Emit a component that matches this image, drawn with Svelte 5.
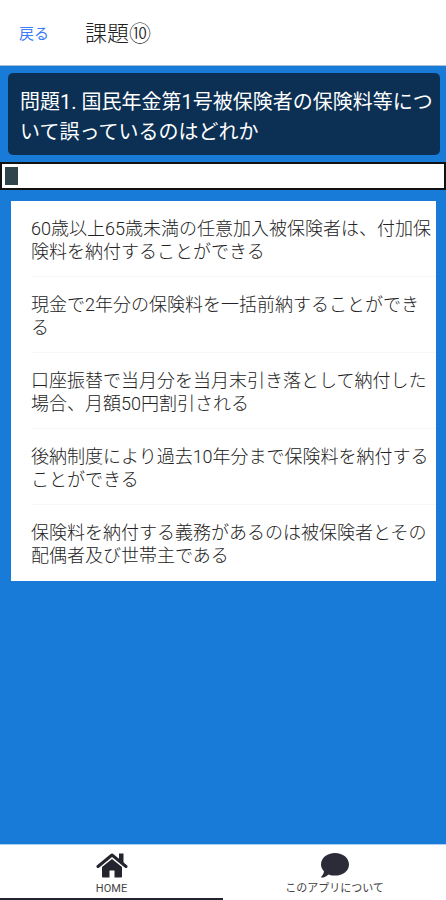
<script lang="ts">
  let title = "課題⑩";
  let question = "問題1. 国民年金第1号被保険者の保険料等について誤っているのはどれか";
  let progress = 3;

  let choices: string[] = [
    "60歳以上65歳未満の任意加入被保険者は、付加保険料を納付することができる",
    "現金で2年分の保険料を一括前納することができる",
    "口座振替で当月分を当月末引き落として納付した場合、月額50円割引される",
    "後納制度により過去10年分まで保険料を納付することができる",
    "保険料を納付する義務があるのは被保険者とその配偶者及び世帯主である",
  ];

  let selected: number | null = null;
</script>

<div class="page">
  <header>
    <button class="back">戻る</button>
    <h1>{title}</h1>
  </header>

  <main>
    <h2 class="question">{question}</h2>

    <progress value={progress} max="100" aria-label="進捗"></progress>

    <ul class="choices">
      {#each choices as choice, index}
        <li>
          <button aria-pressed={selected === index} on:click={() => (selected = index)}>{choice}</button>
        </li>
      {/each}
    </ul>
  </main>

  <!-- Bottom tabs -->
  <nav>
    <a href="#home" class="active">
      <svg viewBox="0 0 32 26" width="32" height="26" aria-hidden="true">
        <path d="M2 13.500 L16 2 L30 13.500" fill="none" stroke="#24242f" stroke-width="3" stroke-linecap="round" stroke-linejoin="round" />
        <path d="M23 0.500 h4.500 v10 l-4.500 -4 z" fill="#24242f" />
        <path d="M16 6 L26 14 V23.500 Q26 24.500 25 24.500 H18.500 V17.500 H13.500 V24.500 H7 Q6 24.500 6 23.500 V14 Z" fill="#24242f" />
      </svg>
      <span>HOME</span>
    </a>
    <a href="#about">
      <svg viewBox="0 0 32 26" width="32" height="26" aria-hidden="true">
        <path d="M16 0 C24 0 30 5 30 11.500 C30 18 24 22.600 16 22.600 C13.500 22.600 11.500 22.200 9.500 21.400 C7.500 23.300 5 24.600 2.800 24.600 C2.200 24.600 2 24 2.400 23.600 C4 21.800 4.800 20.100 5 18.200 C3 16.400 2 14 2 11.500 C2 5 8 0 16 0 Z" fill="#2c2c38" />
      </svg>
      <span>このアプリについて</span>
    </a>
  </nav>
</div>

<style>
  :global(body) {
    margin: 0;
    background: #197bd8;
  }

  .page {
    display: flex;
    flex-direction: column;
    min-height: 100vh;
    background: #197bd8;
    color: #222;
    font-family: Roboto, "Noto Sans CJK JP", sans-serif;
  }

  button {
    border: 0;
    background: none;
    font-family: inherit;
    cursor: pointer;
  }

  header {
    display: flex;
    align-items: center;
    gap: 36px;
    box-sizing: border-box;
    height: 66px;
    padding: 0 19px 4px;
    background: #fff;
    border-bottom: 1px solid #a9bfd6;
  }

  .back {
    padding: 4px 0 0;
    color: #3b7df5;
    font-size: 15px;
  }

  h1 {
    margin: 0;
    font-size: 22px;
    font-weight: 300;
  }

  main {
    flex: 1;
  }

  .question {
    margin: 7px 6px 7px 8px;
    padding: 14px 4px 8px 12px;
    border-radius: 5px;
    background: #0b3054;
    color: #fff;
    font-size: 20px;
    font-weight: 400;
    line-height: 30px;
  }

  progress {
    appearance: none;
    display: block;
    box-sizing: border-box;
    width: 100%;
    height: 28px;
    padding: 3px;
    border: 2px solid #111;
    background: #fff;
  }

  progress::-webkit-progress-bar {
    background: #fff;
  }

  progress::-webkit-progress-value {
    background: #2f444c;
  }

  .choices {
    margin: 11px 10px 11px 11px;
    padding: 0;
    list-style: none;
    background: #fff;
  }

  .choices li {
    padding-left: 20px;
  }

  .choices button {
    display: block;
    box-sizing: border-box;
    width: 100%;
    padding: 16px 0 13px;
    border-bottom: 1px solid #f7f7f7;
    color: #222;
    font-size: 18px;
    font-weight: 300;
    line-height: 23px;
    text-align: left;
  }

  .choices li:last-child button {
    border-bottom-color: transparent;
  }

  nav {
    display: flex;
    background: #fff;
    border-top: 1px solid #a9cdf0;
  }

  nav a {
    flex: 1;
    display: flex;
    flex-direction: column;
    align-items: center;
    gap: 2px;
    padding: 8px 0 1px;
    border-bottom: 2px solid transparent;
    color: #444;
    font-size: 11px;
    line-height: 16px;
    text-decoration: none;
  }

  nav a.active {
    border-bottom-color: #24242f;
  }
</style>
